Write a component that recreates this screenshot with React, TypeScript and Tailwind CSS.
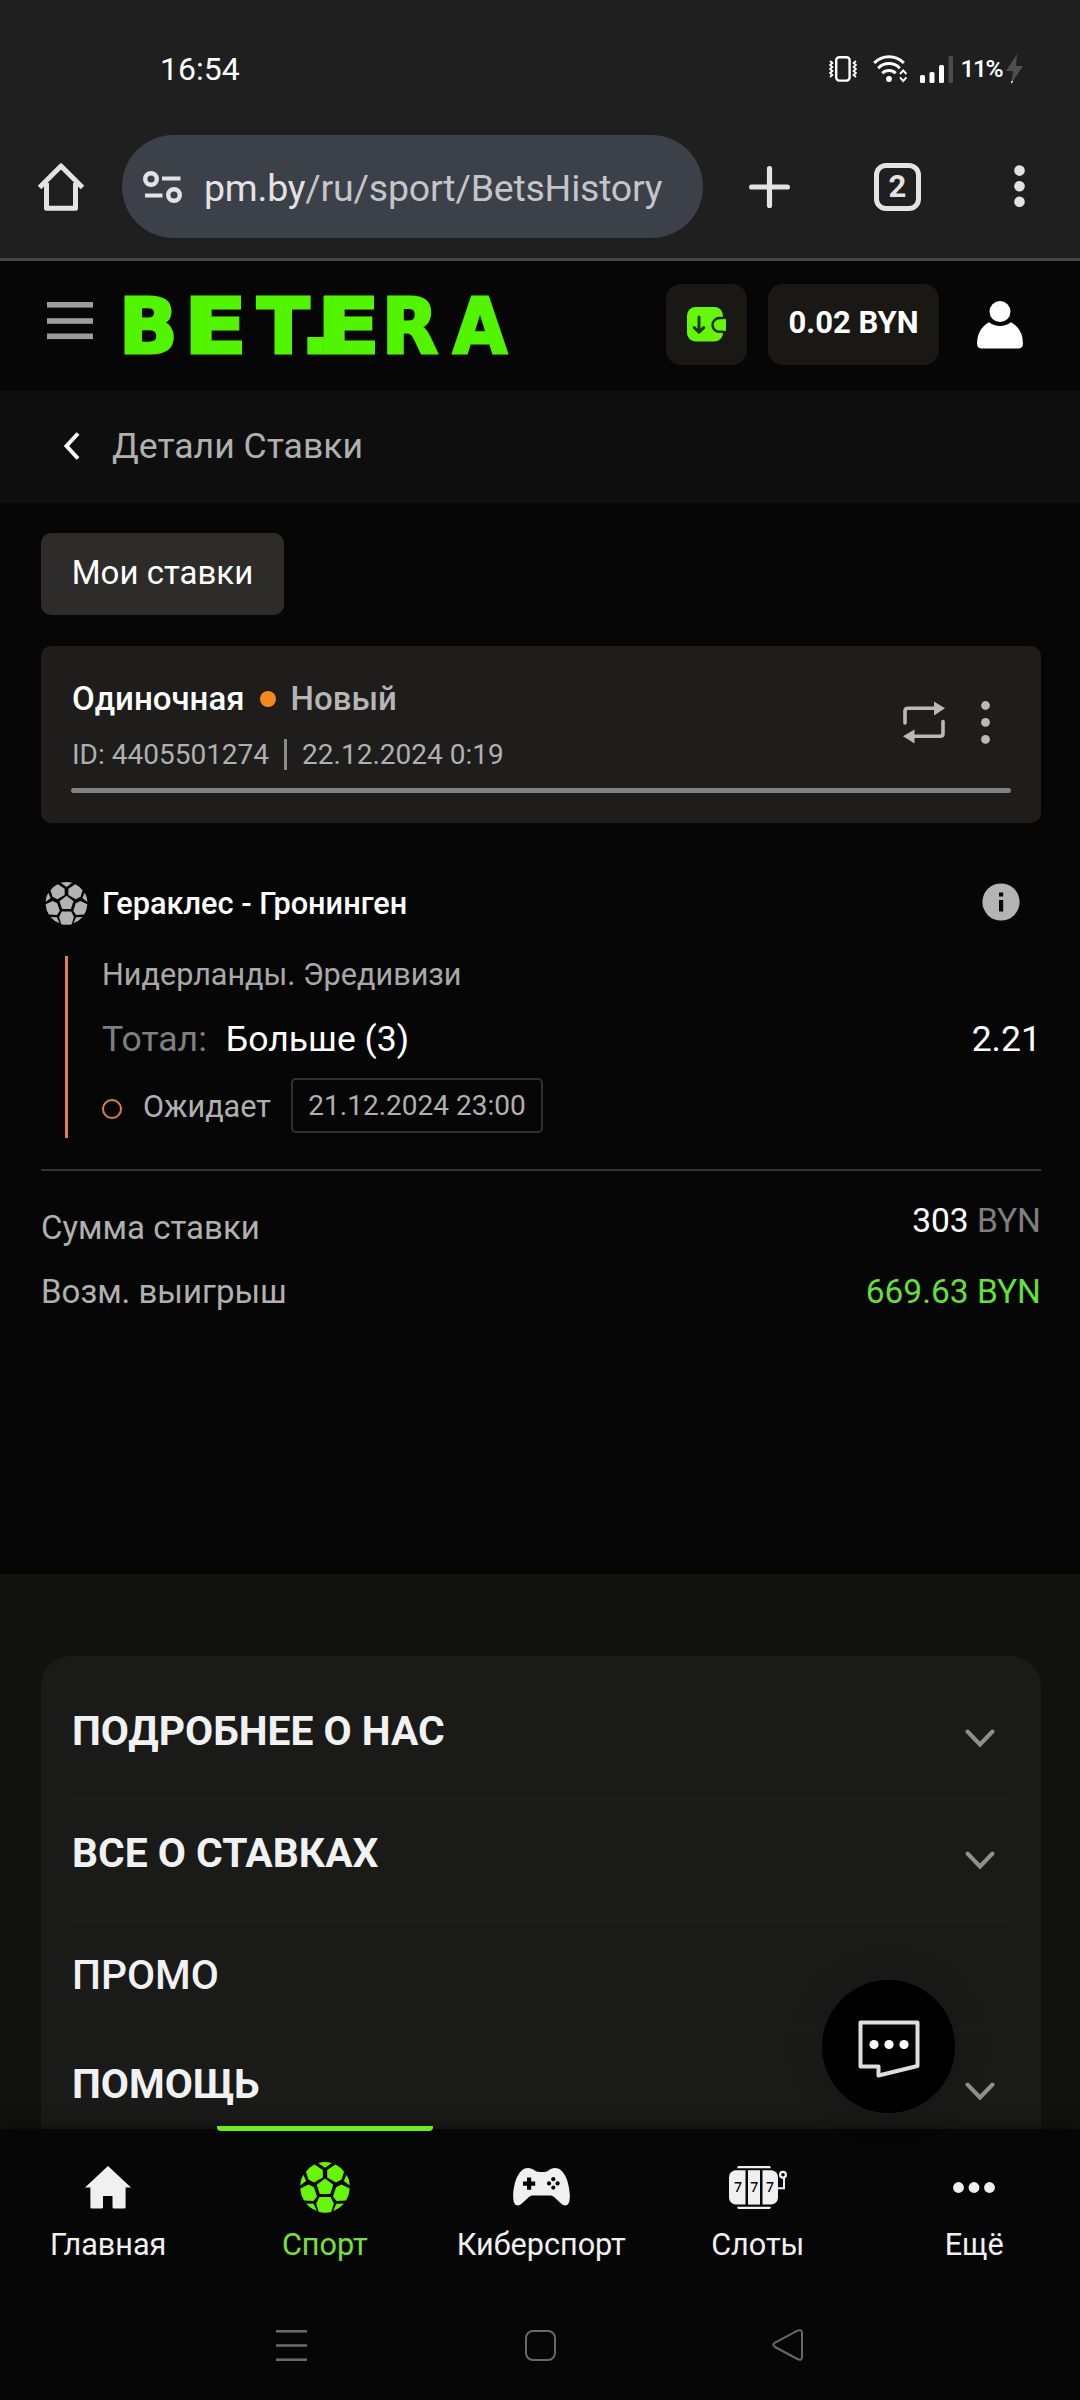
import { ReactNode } from "react";

const footerLinks = [
  { title: "ПОДРОБНЕЕ О НАС", height: "h-[122px]", weight: "font-bold", expandable: true },
  { title: "ВСЕ О СТАВКАХ", height: "h-[122px]", weight: "font-bold", expandable: true },
  { title: "ПРОМО", height: "h-[109px]", weight: "font-medium", expandable: false },
  { title: "ПОМОЩЬ", height: "h-[123px]", weight: "font-bold", expandable: true },
];

function VibrateIcon() {
  return (
    <svg width="28" height="26" viewBox="0 0 28 26" fill="none" stroke="white">
      <rect x="7.2" y="1.2" width="13.4" height="23.4" rx="3" strokeWidth="2.4" />
      <path d="M1 5l2.4 2-2.4 2 2.4 2-2.4 2 2.4 2-2.4 2 2.4 2-2.4 2" strokeWidth="1.8" />
      <path d="M27 5l-2.4 2 2.4 2-2.4 2 2.4 2-2.4 2 2.4 2-2.4 2 2.4 2" strokeWidth="1.8" />
    </svg>
  );
}

function WifiIcon() {
  return (
    <svg width="35" height="28" viewBox="0 0 35 28" fill="none" stroke="white">
      <path d="M1.2 8a20.5 20.5 0 0 1 29.6 0" strokeWidth="3" />
      <path d="M5.2 13.2a15 15 0 0 1 21.6 0" strokeWidth="3" />
      <path d="M9.3 18.2a9.4 9.4 0 0 1 13.4 0" strokeWidth="3" />
      <circle cx="16" cy="24" r="2.9" fill="white" stroke="none" />
      <path d="M27 19l3.2-3.6 3.2 3.6M27 22.4l3.2 3.6 3.2-3.6" strokeWidth="2" />
    </svg>
  );
}

function SignalIcon() {
  return (
    <svg width="33" height="27" viewBox="0 0 33 27" fill="white">
      <rect x="0" y="19" width="5" height="8" rx="1.5" />
      <rect x="9.5" y="16" width="5" height="11" rx="1.5" />
      <rect x="19" y="9" width="5" height="18" rx="1.5" />
      <rect x="28.6" y="0" width="4.4" height="27" rx="1.5" fill="#4c4c4c" />
    </svg>
  );
}

function BoltIcon() {
  return (
    <svg width="17" height="30" viewBox="0 0 17 30" fill="#4e4e4e">
      <path d="M11 0L0 17h7L5 30l12-18H10z" />
      <path d="M5.3 27l2 0-2.1 3z" fill="white" />
    </svg>
  );
}

function BallIcon({ className }: { className: string }) {
  return (
    <svg className={className} viewBox="0 0 50 51" fill="currentColor">
      <path d="M25 16.4L33.3 22.8 30.2 32H19.8L16.7 22.8z" />
      <path d="M14.5 2.6L22.8 8v7.4L14 20.4 8.4 17.6 6 9.8Q9 5.4 14.5 2.6z" />
      <path d="M35.5 2.6L27.2 8v7.4L36 20.4 41.6 17.6 44 9.8Q41 5.4 35.5 2.6z" />
      <path d="M3.4 12.8L6.2 19 .2 23.6Q.4 17.5 3.4 12.8z" />
      <path d="M46.6 12.8L43.8 19 49.8 23.6Q49.6 17.5 46.6 12.8z" />
      <path d="M.3 26.4L8.6 22.4 14 25.2 17 34.4 13.5 39 4 38.6Q.6 33 .3 26.4z" />
      <path d="M49.7 26.4L41.4 22.4 36 25.2 33 34.4 36.5 39 46 38.6Q49.4 33 49.7 26.4z" />
      <path d="M19.4 35H30.6L33.8 41.4 31.2 50Q25 51.6 18.8 50L16.2 41.4z" />
      <path d="M6 41.4L13.6 41.8 16.8 49Q10.5 46.6 6 41.4z" />
      <path d="M44 41.4L36.4 41.8 33.2 49Q39.5 46.6 44 41.4z" />
      <path d="M18.2 1Q25-.8 31.8 1L25 5.8z" />
    </svg>
  );
}

function Chevron() {
  return (
    <svg width="30" height="19" viewBox="0 0 30 19" fill="none" stroke="#8f8f8d" strokeWidth="4" strokeLinecap="round">
      <path d="M2.5 2.5L15 15.5 27.5 2.5" />
    </svg>
  );
}

function StatusBar() {
  return (
    <div className="flex h-[135px] items-start pl-[160px] pr-[57px] pt-[49px]">
      <div className="text-[32px] leading-[40px] text-white">16:54</div>
      <div className="ml-auto flex h-[40px] items-center">
        <VibrateIcon />
        <div className="ml-4">
          <WifiIcon />
        </div>
        <div className="ml-[12px]">
          <SignalIcon />
        </div>
        <div className="ml-2 text-[24.5px] font-medium leading-[40px] tracking-[-1.5px] text-white">11%</div>
        <div className="ml-1">
          <BoltIcon />
        </div>
      </div>
    </div>
  );
}

function AddressBar() {
  return (
    <div className="flex h-[103px] items-center pl-[37px]">
      <svg width="48" height="50" viewBox="0 0 48 50" fill="none" stroke="#e3e3e3" strokeWidth="5" strokeLinejoin="round">
        <path d="M9.5 21V46.3H38.5V21" />
        <path d="M2.5 25.5L24 4 45.5 25.5" />
      </svg>
      <div className="ml-[37px] flex h-[103px] w-[581px] items-center rounded-full bg-[#3b4049] pl-[21px]">
        <svg width="39" height="32" viewBox="0 0 39 32" fill="none" stroke="#e3e3e3" strokeWidth="4.4">
          <circle cx="8" cy="8" r="5.8" />
          <path d="M19 7.5H37.5M2 24.5H19.5" strokeWidth="4" />
          <circle cx="31" cy="24" r="5.8" />
        </svg>
        <div className="ml-[22px] whitespace-nowrap pt-[3px] text-[37.5px] leading-[44px] tracking-[-0.22px] text-[#c4c5c8]">
          <span className="text-[#e3e3e3]">pm.by</span>/ru/sport/BetsHistory
        </div>
      </div>
      <svg className="ml-[46px]" width="41" height="42" viewBox="0 0 41 42" stroke="#e3e3e3" strokeWidth="5.2" strokeLinecap="round">
        <path d="M20.5 2.6V39.4M2.6 21H38.4" />
      </svg>
      <div className="ml-[84px] flex h-[48px] w-[47px] items-center justify-center rounded-[12px] border-[5px] border-[#e3e3e3] text-[31px] font-bold leading-none text-[#e3e3e3]">
        2
      </div>
      <svg className="ml-[93px]" width="11" height="43" viewBox="0 0 11 43" fill="#e3e3e3">
        <circle cx="5.5" cy="5.6" r="5.3" />
        <circle cx="5.5" cy="21.2" r="5.3" />
        <circle cx="5.5" cy="36.8" r="5.3" />
      </svg>
    </div>
  );
}

function SiteHeader() {
  return (
    <div className="flex h-[130px] shrink-0 items-start bg-[#060606] pl-[47px]">
      <svg className="mt-[41px]" width="46" height="38" viewBox="0 0 46 38" fill="#9c9c9c">
        <rect y="0" width="46" height="5.6" />
        <rect y="16.2" width="46" height="5.6" />
        <rect y="31.5" width="46" height="5.6" />
      </svg>
      <svg
        className="ml-[22px] mt-[19px] overflow-visible font-['DejaVu_Sans'] text-[77px] font-bold"
        width="394"
        height="92"
        viewBox="0 0 394 92"
        fill="#52f400"
        stroke="#52f400"
        strokeWidth="3"
      >
        <text y="72.5">
          <tspan x="4">B</tspan>
          <tspan x="69" textLength="63" lengthAdjust="spacingAndGlyphs">E</tspan>
          <tspan x="142">T</tspan>
          <tspan x="186">.</tspan>
          <tspan x="202" textLength="63" lengthAdjust="spacingAndGlyphs">E</tspan>
          <tspan x="267" textLength="56" lengthAdjust="spacingAndGlyphs">R</tspan>
          <tspan x="338" textLength="54" lengthAdjust="spacingAndGlyphs">A</tspan>
        </text>
      </svg>
      <div className="ml-[157px] mt-[23px] flex h-[81px] w-[81px] items-center justify-center rounded-[15px] bg-[#191815]">
        <svg width="39" height="35" viewBox="0 0 39 35">
          <rect width="36" height="34.6" rx="8.5" fill="#64f70a" />
          <path d="M12 10V25M7.2 20.6L12 25.3 16.8 20.6" fill="none" stroke="#16380a" strokeWidth="3" strokeLinecap="round" strokeLinejoin="round" />
          <path d="M41 11H32.5a7 6.9 0 0 0 0 13.8H41z" fill="#64f70a" stroke="#16280a" strokeWidth="2.4" />
          <path d="M36 12.2h2q1 0 1 1.5v8.5q0 1.5-1 1.5h-2z" fill="#64f70a" />
        </svg>
      </div>
      <div className="ml-[21px] mt-[23px] flex h-[81px] w-[171px] justify-center rounded-[15px] bg-[#191815] text-[31px] font-bold leading-[78px] text-white">
        0.02 BYN
      </div>
      <svg className="ml-[38px] mt-[40px]" width="46" height="48" viewBox="0 0 46 48" fill="white">
        <circle cx="23" cy="10.6" r="10.5" />
        <path d="M12 21.2Q17 25 23 25T34 21.2Q46 28 46 43Q45.6 47.4 42 47.4H4Q.4 47.4 0 43Q0 28 12 21.2z" />
      </svg>
    </div>
  );
}

function BetCard() {
  return (
    <div className="mt-[31px] h-[177px] rounded-[10px] bg-[#1e1d1b] px-[30px] pt-8">
      <div className="flex h-[110px]">
        <div className="flex-1 pl-[1px]">
          <div className="flex h-[42px] items-center text-[33px] font-medium leading-[42px] text-white">
            Одиночная
            <div className="ml-[15px] size-4 rounded-full bg-[#f28a20]" />
            <div className="ml-[15px] text-[#b6b6b6]">Новый</div>
          </div>
          <div className="mt-[19px] flex h-[32px] items-center text-[28px] leading-[32px] text-[#b0b0b0]">
            ID: 4405501274
            <div className="-mt-[1px] ml-[15px] h-[31px] w-[3px] bg-[#8b8b8b]" />
            <div className="ml-[15px]">22.12.2024 0:19</div>
          </div>
        </div>
        <svg className="mr-[36px] mt-[23px]" width="42" height="43" viewBox="0 0 42 43">
          <path d="M2 22V10Q2 7.2 5 7.2H31M40 20.5V32.5Q40 35.3 37 35.3H11" fill="none" stroke="#b9b9b9" strokeWidth="3.6" strokeLinecap="round" />
          <path d="M31 .5L42 7.2 31 14.5zM11.5 28.5L0 35.3 11.5 42.5z" fill="#b9b9b9" />
        </svg>
        <svg className="mr-[21px] mt-[23px]" width="9" height="44" viewBox="0 0 9 44" fill="#b9b9b9">
          <circle cx="4.5" cy="4.5" r="4.4" />
          <circle cx="4.5" cy="21.4" r="4.4" />
          <circle cx="4.5" cy="38.4" r="4.4" />
        </svg>
      </div>
      <div className="h-[5px] rounded-full bg-[#808183]" />
    </div>
  );
}

function BetEvent() {
  return (
    <div className="mt-[58px] h-[290px] border-b-2 border-[#333333]">
      <div className="flex h-[44px] items-center pl-1">
        <BallIcon className="h-[43px] w-[43px] text-[#b3b3b3]" />
        <div className="ml-[14px] pt-[1px] text-[30.7px] font-medium leading-[44px] text-white">Гераклес - Гронинген</div>
        <svg className="-mt-[2px] ml-auto mr-[21px]" width="38" height="38" viewBox="0 0 38 38">
          <circle cx="19" cy="19" r="18.6" fill="#b4b4b4" />
          <rect x="17" y="9.5" width="4.2" height="4" fill="#060606" />
          <rect x="17" y="17" width="4.2" height="11.5" fill="#060606" />
        </svg>
      </div>
      <div className="ml-6 mt-[31px] flex h-[182px] border-l-[3px] border-[#dc8447] pl-[34px]">
        <div className="flex-1">
          <div className="text-[30.6px] leading-[38px] text-[#a9a9a9]">Нидерланды. Эредивизи</div>
          <div className="mt-[24px] flex text-[35.6px] leading-[42px]">
            <div className="text-[#7f7f7f]">Тотал:</div>
            <div className="ml-[19px] text-white">Больше (3)</div>
            <div className="ml-auto text-white">2.21</div>
          </div>
          <div className="mt-[18px] flex h-[55px] items-center">
            <div className="mt-[6px] size-5 rounded-full border-2 border-[#dc8447]" />
            <div className="ml-[21px] pt-[1px] text-[30.6px] leading-[55px] text-[#b0b0b0]">Ожидает</div>
            <div className="ml-[20px] flex h-[55px] w-[252px] items-center justify-center rounded-[5px] border-2 border-[#303030] text-[28px] leading-none text-[#b0b0b0]">
              21.12.2024 23:00
            </div>
          </div>
        </div>
      </div>
    </div>
  );
}

function BetTotals() {
  return (
    <div className="text-[33px] leading-[40px] text-[#b0b0b0]">
      <div className="mt-[30px] flex justify-between">
        <div className="mt-[7px]">Сумма ставки</div>
        <div className="text-[33.5px] text-white">
          303 <span className="text-[#7f7f7f]">BYN</span>
        </div>
      </div>
      <div className="mt-[24px] flex justify-between">
        <div>Возм. выигрыш</div>
        <div className="text-[33.5px] text-[#65df3b]">669.63 BYN</div>
      </div>
    </div>
  );
}

function NavItem({ icon, label, active }: { icon: ReactNode; label: string; active?: boolean }) {
  return (
    <div
      className={`relative flex w-[216.5px] shrink-0 flex-col items-center pt-[32px] ${active ? "text-[#6cf01c]" : "text-[#f0f0f0]"}`}
    >
      {active && <div className="absolute -top-[3px] left-0 h-[5px] w-full rounded-b-[4px] bg-[#6eec1c]" />}
      <div className="flex h-[52px] items-center">{icon}</div>
      <div className={`mt-[12px] whitespace-nowrap text-[30.6px] leading-[40px] ${active ? "text-[#78e03a]" : ""}`}>{label}</div>
    </div>
  );
}

function BottomNav() {
  return (
    <div className="relative h-[271px] shrink-0 bg-[#060606] shadow-[0_0_16px_rgba(0,0,0,0.5)]">
      <div className="flex h-[170px]">
        <NavItem
          label="Главная"
          icon={
            <svg width="46" height="43" viewBox="0 0 46 43" fill="currentColor">
              <path d="M23 0L46 21.5H40.6V41Q40.6 42.5 39 42.5H29Q27.5 42.5 27.5 41V30H18V41Q18 42.5 16.5 42.5H7Q5.4 42.5 5.4 41V21.5H0z" />
            </svg>
          }
        />
        <NavItem label="Спорт" active icon={<BallIcon className="h-[51px] w-[50px] text-[#66f607]" />} />
        <NavItem
          label="Киберспорт"
          icon={
            <svg width="57" height="38" viewBox="0 0 57 38" fill="currentColor">
              <path d="M5 37.5C1 37.5 0 33 .2 26C1 13 6 0 15 0C21 0 21 4 27 4H31C36 4 36 0 42 0C51 0 56 13 56.8 26C57 33 56 37.5 52 37.5C48 37.5 41.5 27.5 38 27.5H19C15.5 27.5 9 37.5 5 37.5z" />
              <path d="M14 9.5h4.2v4h4v4.2h-4v4H14v-4h-4v-4.2h4z" fill="#060606" />
              <g fill="#060606">
                <circle cx="40.3" cy="11.2" r="2.1" />
                <circle cx="40.3" cy="19.6" r="2.1" />
                <circle cx="36" cy="15.4" r="2.1" />
                <circle cx="44.6" cy="15.4" r="2.1" />
              </g>
            </svg>
          }
        />
        <NavItem
          label="Слоты"
          icon={
            <svg width="58" height="43" viewBox="0 0 58 43" fill="currentColor">
              <path d="M8 2.2L9 0H41L42 2.2zM8 40.8L9 43H41L42 40.8z" />
              <path d="M16.5 4.2V38.6H6Q0 37 0 31V11.5Q0 5.5 6 4.2z" />
              <rect x="19" y="4.2" width="12" height="34.4" />
              <path d="M33.5 4.2H43Q49 5.5 49 11.5V31Q49 37 43 38.6H33.5z" />
              <path d="M49 22.3H55V12" fill="none" stroke="currentColor" strokeWidth="2" />
              <circle cx="54" cy="8.7" r="2.9" fill="none" stroke="currentColor" strokeWidth="2.2" />
              <g className="font-['Noto_Sans'] text-[14px] font-medium" fill="#060606">
                <text x="5" y="26">7</text>
                <text x="21.2" y="26">7</text>
                <text x="37" y="26">7</text>
              </g>
            </svg>
          }
        />
        <NavItem
          label="Ещё"
          icon={
            <svg width="42" height="11" viewBox="0 0 42 11" fill="currentColor">
              <circle cx="5.5" cy="5.5" r="5.4" />
              <circle cx="21" cy="5.5" r="5.4" />
              <circle cx="36.5" cy="5.5" r="5.4" />
            </svg>
          }
        />
      </div>
      <div className="flex items-center pl-[276px] pt-[30px]">
        <svg width="31" height="31" viewBox="0 0 31 31" fill="#686868">
          <rect y="0" width="31" height="2.6" />
          <rect y="14.2" width="31" height="2.6" />
          <rect y="28.4" width="31" height="2.6" />
        </svg>
        <div className="ml-[218px] size-[31px] rounded-[8px] border-2 border-[#686868]" />
        <svg className="ml-[216px]" width="32" height="32" viewBox="0 0 32 32" fill="none" stroke="#686868" strokeWidth="2" strokeLinejoin="round">
          <path d="M25.5 1.6Q30 0 30 4V28Q30 32 25.5 30L3 18Q-.5 15.8 3 13.6z" />
        </svg>
      </div>
    </div>
  );
}

export default function App() {
  return (
    <div className="relative flex h-[2400px] w-[1080px] flex-col overflow-hidden bg-[#060606] font-['Roboto',sans-serif]">
      <div className="h-[261px] shrink-0 border-b-[3px] border-[#454545] bg-[#1f1f1f]">
        <StatusBar />
        <AddressBar />
      </div>

      <SiteHeader />

      <div className="flex h-[112px] shrink-0 items-center bg-[#0e0e0e] pl-[63px]">
        <svg className="-mt-[3px]" width="17" height="28" viewBox="0 0 17 28" fill="none" stroke="white" strokeWidth="4">
          <path d="M15 1.5L3.5 14 15 26.5" />
        </svg>
        <div className="-mt-[3px] ml-[32px] text-[35.6px] leading-[44px] text-[#b0b0b0]">Детали Ставки</div>
      </div>

      <div className="h-[1071px] shrink-0 pl-[41px] pr-[39px] pt-[30px]">
        <div className="flex h-[82px] w-[243px] justify-center rounded-[10px] bg-[#2d2c2a] text-[33px] leading-[80px] text-white">
          Мои ставки
        </div>
        <BetCard />
        <BetEvent />
        <BetTotals />
      </div>

      <div className="min-h-0 flex-1 overflow-hidden bg-[#11110f] pl-[41px] pr-[39px] pt-[82px]">
        <div className="rounded-t-[30px] bg-[#1a1a18] px-[30px] pt-[22px]">
          {footerLinks.map((link) => (
            <div key={link.title} className={`flex justify-between border-b-2 border-[#1d1d1b] ${link.height}`}>
              <div className={`pl-[1px] pt-[27px] text-[40.8px] leading-[52px] text-[#f1f1f1] ${link.weight}`}>{link.title}</div>
              {link.expandable && (
                <div className="mr-4 mt-[51px]">
                  <Chevron />
                </div>
              )}
            </div>
          ))}
        </div>
      </div>

      <BottomNav />

      {/* floating support chat button */}
      <div className="absolute left-[822px] top-[1980px] flex size-[133px] items-center justify-center rounded-full bg-black shadow-[0_0_40px_rgba(0,0,0,0.12)]">
        <svg className="mt-[5px]" width="62" height="58" viewBox="0 0 62 58">
          <path d="M2.5 2.5H59.5V46L20.5 55.5V46.5H2.5z" fill="none" stroke="#dedede" strokeWidth="4" strokeLinejoin="round" />
          <g fill="white">
            <circle cx="16" cy="24.5" r="4.6" />
            <circle cx="31" cy="24.5" r="4.6" />
            <circle cx="46" cy="24.5" r="4.6" />
          </g>
        </svg>
      </div>
    </div>
  );
}
